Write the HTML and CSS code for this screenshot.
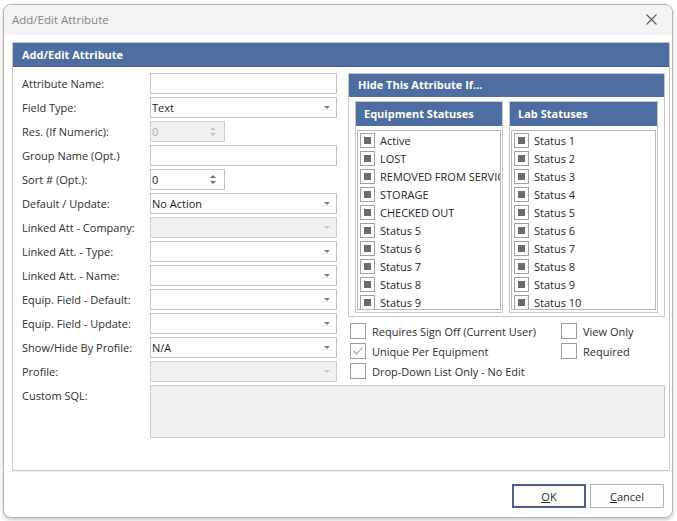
FILE: index.html
```html
<html>

<head>
    <title>Add/Edit Attribute</title>
    <link rel="stylesheet" href="styles.css">
</head>

<body>
    <div class="window">
        <div class="titlebar">
            <span class="title">Add/Edit Attribute</span>
            <svg class="close" width="11" height="11" viewBox="0 0 11 11">
                <path d="M0.5 0.5 L10.5 10.5 M10.5 0.5 L0.5 10.5" stroke="#5a5a5a" stroke-width="1.1" fill="none" />
            </svg>
        </div>
        <div class="client">
            <div class="panel">
                <div class="panel-head">Add/Edit Attribute</div>
                <div class="panel-body">
                    <div class="top">
                        <div class="form">
                            <label>Attribute Name:</label>
                            <div class="field"></div>
                            <label>Field Type:</label>
                            <div class="field combo">Text</div>
                            <label>Res. (If Numeric):</label>
                            <div class="field spin disabled"><span>0</span><i class="arrows"></i></div>
                            <label>Group Name (Opt.)</label>
                            <div class="field"></div>
                            <label>Sort # (Opt.):</label>
                            <div class="field spin"><span>0</span><i class="arrows"></i></div>
                            <label>Default / Update:</label>
                            <div class="field combo">No Action</div>
                            <label>Linked Att - Company:</label>
                            <div class="field combo disabled"></div>
                            <label>Linked Att. - Type:</label>
                            <div class="field combo"></div>
                            <label>Linked Att. - Name:</label>
                            <div class="field combo"></div>
                            <label>Equip. Field - Default:</label>
                            <div class="field combo"></div>
                            <label>Equip. Field - Update:</label>
                            <div class="field combo"></div>
                            <label>Show/Hide By Profile:</label>
                            <div class="field combo">N/A</div>
                            <label>Profile:</label>
                            <div class="field combo disabled"></div>
                        </div>
                        <div class="side">
                            <div class="group">
                                <div class="group-head">Hide This Attribute If...</div>
                                <div class="cols">
                                    <div class="col">
                                        <div class="col-head">Equipment Statuses</div>
                                        <div class="list">
                                            <div class="item"><i class="box"></i>Active</div>
                                            <div class="item"><i class="box"></i>LOST</div>
                                            <div class="item"><i class="box"></i>REMOVED FROM SERVICE</div>
                                            <div class="item"><i class="box"></i>STORAGE</div>
                                            <div class="item"><i class="box"></i>CHECKED OUT</div>
                                            <div class="item"><i class="box"></i>Status 5</div>
                                            <div class="item"><i class="box"></i>Status 6</div>
                                            <div class="item"><i class="box"></i>Status 7</div>
                                            <div class="item"><i class="box"></i>Status 8</div>
                                            <div class="item"><i class="box"></i>Status 9</div>
                                        </div>
                                    </div>
                                    <div class="col">
                                        <div class="col-head">Lab Statuses</div>
                                        <div class="list">
                                            <div class="item"><i class="box"></i>Status 1</div>
                                            <div class="item"><i class="box"></i>Status 2</div>
                                            <div class="item"><i class="box"></i>Status 3</div>
                                            <div class="item"><i class="box"></i>Status 4</div>
                                            <div class="item"><i class="box"></i>Status 5</div>
                                            <div class="item"><i class="box"></i>Status 6</div>
                                            <div class="item"><i class="box"></i>Status 7</div>
                                            <div class="item"><i class="box"></i>Status 8</div>
                                            <div class="item"><i class="box"></i>Status 9</div>
                                            <div class="item"><i class="box"></i>Status 10</div>
                                        </div>
                                    </div>
                                </div>
                            </div>
                            <div class="flags">
                                <div class="flag"><i class="check"></i>Requires Sign Off (Current User)</div>
                                <div class="flag"><i class="check"></i>View Only</div>
                                <div class="flag"><i class="check"><svg width="14" height="14" viewBox="0 0 14 14"><path d="M2.5 7 L5.5 10 L11.5 3.5" stroke="#9a9a9a" stroke-width="1.1" fill="none" /></svg></i>Unique Per Equipment</div>
                                <div class="flag"><i class="check"></i>Required</div>
                                <div class="flag"><i class="check"></i>Drop-Down List Only - No Edit</div>
                            </div>
                        </div>
                    </div>
                    <div class="sql-row">
                        <label>Custom SQL:</label>
                        <div class="sql"></div>
                    </div>
                </div>
            </div>
        </div>
        <div class="footer">
            <button class="btn btn-default"><u>O</u>K</button>
            <button class="btn"><u>C</u>ancel</button>
        </div>
    </div>
</body>

</html>
```

FILE: styles.css
```css
body {
    margin: 0;
    background-color: #fff;
    font-family: "Open Sans", "Noto Sans", Arial, sans-serif;
    font-size: 11px;
    line-height: 15px;
    color: #2e2e2e;
}

.window {
    box-sizing: border-box;
    width: 670px;
    height: 514px;
    margin: 4px 0 0 3px;
    border: 1px solid #b4b4b4;
    border-radius: 8px;
    box-shadow: 0 2px 4px rgba(0, 0, 0, 0.22);
    overflow: hidden;
    display: flex;
    flex-direction: column;
    background-color: #fff;
}

.titlebar {
    height: 30px;
    flex: none;
    background-color: #f3f3f3;
    display: flex;
    align-items: center;
    padding-left: 8px;
    padding-right: 15px;
}

.title {
    font-size: 11.5px;
    color: #858585;
    margin-top: -2px;
}

.close {
    margin-left: auto;
    margin-top: -1px;
}

.client {
    padding: 7px 2px 0 8px;
}

.panel {
    box-sizing: border-box;
    height: 429px;
    border: 1px solid #c8c8c8;
}

.panel-head {
    height: 24px;
    line-height: 23px;
    padding-left: 9px;
    background-color: #4e6ea1;
    color: #fff;
    font-weight: bold;
    border-bottom: 1px solid #41608f;
    box-sizing: border-box;
}

.panel-body {
    padding: 6px 0 0 9px;
}

.top {
    display: flex;
}

.form {
    display: grid;
    grid-template-columns: 128px 187px;
    grid-auto-rows: 21px;
    row-gap: 3px;
}

.form label,
.sql-row label {
    display: flex;
    align-items: center;
}

.field {
    box-sizing: border-box;
    height: 21px;
    border: 1px solid #c4c4c4;
    background-color: #fff;
    padding-left: 1px;
    display: flex;
    align-items: center;
    color: #1e1e1e;
}

.field.disabled {
    background-color: #f0f0f0;
    border-color: #cfcfcf;
    color: #a8a8a8;
}

.combo:after {
    content: "";
    margin-left: auto;
    margin-right: 6px;
    border-left: 3px solid transparent;
    border-right: 3px solid transparent;
    border-top: 3px solid #7a7a7a;
}

.combo.disabled:after {
    border-top-color: #c4c4c4;
}

.spin {
    width: 75px;
}

.arrows {
    margin-left: auto;
    margin-right: 8px;
    display: flex;
    flex-direction: column;
    gap: 3px;
}

.arrows:before,
.arrows:after {
    content: "";
    border-left: 3px solid transparent;
    border-right: 3px solid transparent;
}

.arrows:before {
    border-bottom: 3px solid #6f6f6f;
}

.arrows:after {
    border-top: 3px solid #6f6f6f;
}

.disabled .arrows:before {
    border-bottom-color: #c2c2c2;
}

.disabled .arrows:after {
    border-top-color: #c2c2c2;
}

.side {
    width: 317px;
    margin-left: 11px;
}

.group {
    box-sizing: border-box;
    height: 244px;
    border: 1px solid #c8c8c8;
}

.group-head,
.col-head {
    background-color: #4e6ea1;
    color: #fff;
    font-weight: bold;
    box-sizing: border-box;
}

.group-head {
    height: 23px;
    line-height: 22px;
    padding-left: 9px;
}

.cols {
    display: flex;
    gap: 6px;
    padding: 4px 6px 0 6px;
}

.col {
    box-sizing: border-box;
    height: 212px;
    width: 148px;
    border: 1px solid #c8c8c8;
}

.col + .col {
    width: 149px;
}

.col-head {
    height: 24px;
    line-height: 24px;
    padding-left: 8px;
}

.list {
    box-sizing: border-box;
    height: 180px;
    margin: 4px 1px 0 1px;
    border: 1px solid #b9b9b9;
    overflow: hidden;
    padding: 0 0 0 2px;
}

.item {
    height: 18px;
    display: flex;
    align-items: center;
    white-space: nowrap;
    color: #262626;
}

.box {
    box-sizing: border-box;
    width: 15px;
    height: 15px;
    flex: none;
    border: 1px solid #a0a0a0;
    background-color: #fff;
    margin-right: 5px;
    display: flex;
    align-items: center;
    justify-content: center;
}

.box:after {
    content: "";
    width: 7px;
    height: 7px;
    background-color: #6b6b6b;
}

.flags {
    display: grid;
    grid-template-columns: 211px auto;
    grid-auto-rows: 20px;
    padding: 4px 0 0 2px;
}

.flag {
    display: flex;
    align-items: center;
    white-space: nowrap;
}

.check {
    box-sizing: border-box;
    width: 16px;
    height: 16px;
    flex: none;
    border: 1px solid #9d9d9d;
    background-color: #fff;
    margin-right: 6px;
    display: flex;
    align-items: center;
    justify-content: center;
}

.sql-row {
    display: flex;
    margin-top: 3px;
}

.sql-row label {
    width: 128px;
    height: 21px;
}

.sql {
    box-sizing: border-box;
    width: 515px;
    height: 53px;
    background-color: #f0f0f0;
    border: 1px solid #c8c8c8;
}

.footer {
    flex: 1;
    display: flex;
    justify-content: flex-end;
    align-items: flex-start;
    gap: 4px;
    padding: 12px 8px 0 0;
    border-top: 1px solid #f3f3f3;
}

.btn {
    box-sizing: border-box;
    width: 74px;
    height: 24px;
    background-color: #fdfdfd;
    border: 1px solid #b0b0b0;
    font-family: "Open Sans", "Noto Sans", Arial, sans-serif;
    font-size: 11px;
    color: #2a2a2a;
    padding: 0;
}

.btn-default {
    border: 2px solid #4a6089;
}
```
